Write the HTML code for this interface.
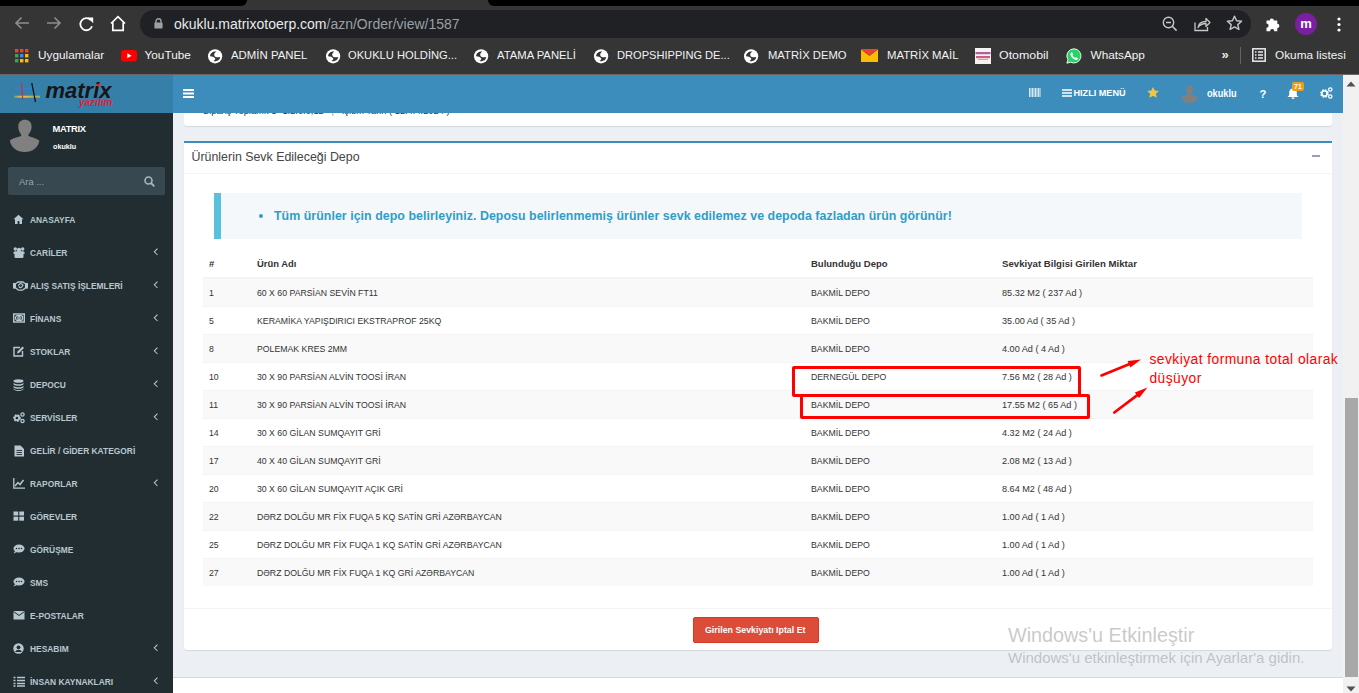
<!DOCTYPE html>
<html><head><meta charset="utf-8">
<style>
*{margin:0;padding:0;box-sizing:border-box}
html,body{width:1359px;height:693px;overflow:hidden;background:#fff;font-family:"Liberation Sans",sans-serif}
.a{position:absolute;white-space:nowrap}
svg{position:absolute;overflow:visible}
#chrome{position:absolute;left:0;top:0;width:1359px;height:74px;background:#353535}
#tabs{position:absolute;left:488px;top:0;width:871px;height:6px;background:#000;border-radius:0 0 0 6px}
#url{position:absolute;left:140px;top:10px;width:1111px;height:28px;background:#202124;border-radius:14px}
.bm{position:absolute;top:48.3px;font-size:11.8px;color:#f1f3f4;line-height:14px;white-space:nowrap}
#hdr{position:absolute;left:0;top:75px;width:1343px;height:38px;background:#3c8dbc}
#logo{position:absolute;left:0;top:75px;width:173px;height:38px;background:#367fa9}
#side{position:absolute;left:0;top:113px;width:173px;height:580px;background:#222d32}
#content{position:absolute;left:173px;top:113px;width:1170px;height:580px;background:#ecf0f5}
#sb{position:absolute;left:1343px;top:75px;width:16px;height:618px;background:#f1f1f1}
#cline{position:absolute;left:0;top:74px;width:1359px;height:1px;background:#6a6464}
.mi{position:absolute;left:30px;font-size:9.9px;font-weight:bold;color:#b8c7ce;line-height:10px;white-space:nowrap;transform:scaleX(.85);transform-origin:0 0}
.chev{position:absolute;left:153px}
.row{position:absolute;left:203px;width:1110px;height:28px;border-top:1px solid #f4f4f4}
.row.s{background:#f9f9f9}
.c{position:absolute;top:8.6px;font-size:9.8px;color:#333;line-height:10px;white-space:nowrap;transform:scaleX(.89);transform-origin:0 0}
.c.n{transform:scaleX(.93)}
.th{position:absolute;top:258.6px;font-size:9.8px;font-weight:bold;color:#333;line-height:10px;white-space:nowrap;transform:scaleX(.97);transform-origin:0 0}
</style></head><body>
<div id="chrome">
  <div id="tabs"></div><div style="position:absolute;left:0;top:0;width:247px;height:6px;background:#000;border-radius:0 0 6px 0"></div>
  <div id="url"></div>
  <!-- nav icons -->
  <svg style="left:14px;top:16px" width="16" height="14" viewBox="0 0 16 14"><path d="M15 7H2M7.5 1.5L2 7l5.5 5.5" fill="none" stroke="#8a8d91" stroke-width="1.6"/></svg>
  <svg style="left:46px;top:16px" width="16" height="14" viewBox="0 0 16 14"><path d="M1 7h13M8.5 1.5L14 7l-5.5 5.5" fill="none" stroke="#8a8d91" stroke-width="1.6"/></svg>
  <svg style="left:78.5px;top:16.5px" width="15" height="15" viewBox="0 0 15 15"><path d="M13 9.2A6 6 0 1 1 11.8 3.2" fill="none" stroke="#fff" stroke-width="1.8"/><path d="M8.6 0.6h5.6v5.6z" fill="#fff"/></svg>
  <svg style="left:110px;top:15px" width="16" height="17" viewBox="0 0 16 17"><path d="M2.8 7.5V15.3h10.4V7.5M1 8.5L8 1.6l7 6.9" fill="none" stroke="#fff" stroke-width="1.7" stroke-linejoin="miter"/></svg>
  <svg style="left:154px;top:18px" width="9" height="11" viewBox="0 0 9 11"><path d="M2 5V3.3a2.5 2.5 0 0 1 5 0V5" fill="none" stroke="#9aa0a6" stroke-width="1.4"/><rect x="0.4" y="4.6" width="8.2" height="6" rx="0.8" fill="#9aa0a6"/></svg>
  <div class="a" style="left:174px;top:16px;font-size:14px;line-height:17px;color:#e8eaed">okuklu.matrixotoerp.com<span style="color:#9aa0a6">/azn/Order/view/1587</span></div>
  <!-- right icons -->
  <svg style="left:1162px;top:16px" width="16" height="16" viewBox="0 0 16 16"><circle cx="6.5" cy="6.5" r="5.2" fill="none" stroke="#c4c7c5" stroke-width="1.4"/><path d="M4 6.5h5M10.3 10.3L14.6 14.6" stroke="#c4c7c5" stroke-width="1.5"/></svg>
  <svg style="left:1194px;top:16px" width="17" height="16" viewBox="0 0 17 16"><path d="M1 6.5V14.5h12.5V11" fill="none" stroke="#c4c7c5" stroke-width="1.3"/><path d="M4 11.5c0.6-4 3.5-6 8-6V2.5l4 4-4 4V7.5c-3.5 0-6 1-8 4z" fill="none" stroke="#c4c7c5" stroke-width="1.3" stroke-linejoin="round"/></svg>
  <svg style="left:1226px;top:15px" width="17" height="16" viewBox="0 0 17 16"><path d="M8.5 1.2l2.1 4.6 5 .5-3.8 3.3 1.1 4.9-4.4-2.6-4.4 2.6 1.1-4.9L1.4 6.3l5-.5z" fill="none" stroke="#c4c7c5" stroke-width="1.4" stroke-linejoin="round"/></svg>
  <svg style="left:1265px;top:15px" width="17" height="17" viewBox="0 0 17 17"><path d="M1.5 5.5h3.2a2.1 2.1 0 1 1 4.2 0h3.4v3.3a2.1 2.1 0 1 1 0 4.2v3.2H9.3a2.1 2.1 0 1 0-4.2 0H1.5v-3.4a2.1 2.1 0 1 0 0-4.2z" fill="#fff"/></svg>
  <div class="a" style="left:1295px;top:13px;width:22px;height:22px;border-radius:11px;background:#7b1fa2"></div>
  <div class="a" style="left:1295px;top:14.5px;width:22px;text-align:center;font-size:13px;line-height:17px;color:#fff;font-weight:bold">m</div>
  <svg style="left:1336.5px;top:17px" width="4" height="15" viewBox="0 0 4 15"><circle cx="2" cy="2" r="1.6" fill="#fff"/><circle cx="2" cy="7.5" r="1.6" fill="#fff"/><circle cx="2" cy="13" r="1.6" fill="#fff"/></svg>
  <!-- bookmarks -->
  <svg style="left:14.5px;top:49px" width="14" height="14" viewBox="0 0 14 14"><rect x="0" y="0" width="3.4" height="3.4" fill="#ea4335"/><rect x="5" y="0" width="3.4" height="3.4" fill="#ea4335"/><rect x="10" y="0" width="3.4" height="3.4" fill="#ea4335"/><rect x="0" y="5" width="3.4" height="3.4" fill="#34a853"/><rect x="5" y="5" width="3.4" height="3.4" fill="#4285f4"/><rect x="10" y="5" width="3.4" height="3.4" fill="#fbbc05"/><rect x="0" y="10" width="3.4" height="3.4" fill="#34a853"/><rect x="5" y="10" width="3.4" height="3.4" fill="#fbbc05"/><rect x="10" y="10" width="3.4" height="3.4" fill="#fbbc05"/></svg>
  <div class="bm" style="left:38px">Uygulamalar</div>
  <svg style="left:121px;top:50px" width="16" height="12" viewBox="0 0 16 12"><rect x="0" y="0" width="16" height="11.5" rx="3" fill="#f00"/><path d="M6.3 3.3v5l4.3-2.5z" fill="#fff"/></svg>
  <div class="bm" style="left:144.5px">YouTube</div>
  <svg style="left:208px;top:48.5px" width="15" height="15" viewBox="0 0 15 15"><use href="#glb"/></svg>
  <div class="bm" style="left:230.5px;transform:scaleX(0.966);transform-origin:0 0">ADMİN PANEL</div>
  <svg style="left:326px;top:48.5px" width="15" height="15" viewBox="0 0 15 15"><use href="#glb"/></svg>
  <div class="bm" style="left:347.5px;transform:scaleX(0.945);transform-origin:0 0">OKUKLU HOLDİNG...</div>
  <svg style="left:474px;top:48.5px" width="15" height="15" viewBox="0 0 15 15"><use href="#glb"/></svg>
  <div class="bm" style="left:496.5px;transform:scaleX(0.956);transform-origin:0 0">ATAMA PANELİ</div>
  <svg style="left:594px;top:48.5px" width="15" height="15" viewBox="0 0 15 15"><use href="#glb"/></svg>
  <div class="bm" style="left:616.5px;transform:scaleX(0.94);transform-origin:0 0">DROPSHIPPING DE...</div>
  <svg style="left:744px;top:48.5px" width="15" height="15" viewBox="0 0 15 15"><use href="#glb"/></svg>
  <div class="bm" style="left:767.5px;transform:scaleX(0.953);transform-origin:0 0">MATRİX DEMO</div>
  <svg style="left:861px;top:49px" width="17" height="13" viewBox="0 0 17 13"><rect x="0" y="0" width="17" height="13" fill="#fbbc05"/><path d="M0 0l8.5 6.5L17 0" fill="#ea4335"/><path d="M0 0l8.5 6.5L17 0" fill="none" stroke="#c5221f" stroke-width="0.8"/></svg>
  <div class="bm" style="left:886.5px;transform:scaleX(0.96);transform-origin:0 0">MATRİX MAİL</div>
  <svg style="left:975px;top:48px" width="16" height="16" viewBox="0 0 16 16"><rect width="16" height="16" fill="#f6f2f2"/><rect x="0.5" y="4" width="15" height="2.2" fill="#9a4a8a" opacity="0.85"/><rect x="1" y="8" width="14" height="2.2" fill="#c83a5a" opacity="0.8"/><rect x="3" y="11" width="10" height="1" fill="#d0a0b0"/></svg>
  <div class="bm" style="left:999px;transform:scaleX(1.05);transform-origin:0 0">Otomobil</div>
  <svg style="left:1066px;top:48px" width="16" height="16" viewBox="0 0 16 16"><path d="M8 .8A7.1 7.1 0 0 0 1.9 11.6L.9 15.2l3.7-1A7.1 7.1 0 1 0 8 .8z" fill="#25d366" stroke="#fff" stroke-width="0.9"/><path d="M5.3 4.4c.3-.3.7-.3.9 0l.8 1.7c.1.3 0 .5-.2.7l-.4.5c.6 1.2 1.5 2.1 2.7 2.7l.5-.5c.2-.2.5-.2.7-.1l1.6.8c.3.1.3.5.1.8-.5.8-1.3 1.2-2.2.9C7.5 11.3 5.3 9.3 4.5 7c-.3-.9 0-1.9.8-2.6z" fill="#fff"/></svg>
  <div class="bm" style="left:1090.5px">WhatsApp</div>
  <div class="a" style="left:1221.5px;top:47px;font-size:13px;line-height:15px;color:#e8eaed;font-weight:bold">»</div>
  <div class="a" style="left:1240px;top:47px;width:1px;height:17px;background:#5f6368"></div>
  <svg style="left:1252px;top:48px" width="14" height="14" viewBox="0 0 14 14"><rect x="0.8" y="0.8" width="12.4" height="12.4" fill="none" stroke="#e8eaed" stroke-width="1.5"/><path d="M3 4h1.5M6 4h5M3 7h1.5M6 7h5M3 10h1.5M6 10h5" stroke="#e8eaed" stroke-width="1.4"/></svg>
  <div class="bm" style="left:1275px">Okuma listesi</div>
</div>
<svg width="0" height="0" style="position:absolute"><defs><g id="glb"><circle cx="7.1" cy="7.3" r="7.1" fill="#fff"/><path d="M2.1 7.3C2.1 4.3 4.5 2.2 8.4 2.4 6.5 3.6 5.8 5.1 6.4 6.7 7.2 8.2 9.6 8.5 12.2 7.9 12 10.9 9.1 12.5 5.2 12.1 6.8 11.2 7.5 10.3 7.2 9.4 6.2 7.9 4.3 7.5 2.1 7.3z" fill="#353535"/></g></defs></svg>

<div id="hdr"></div>
<div id="logo"></div>
<div id="side"></div>
<div id="content"></div>
<div id="sb"></div><div id="cline"></div>
<!-- header -->
<svg style="left:13px;top:81px" width="28" height="22" viewBox="0 0 28 22"><defs><linearGradient id="yl" gradientUnits="userSpaceOnUse" x1="0" y1="0" x2="28" y2="0"><stop offset="0" stop-color="#e0c040" stop-opacity="0.3"/><stop offset="0.3" stop-color="#e8c848"/><stop offset="1" stop-color="#e0c040" stop-opacity="0.6"/></linearGradient><linearGradient id="bl" gradientUnits="userSpaceOnUse" x1="0" y1="0" x2="28" y2="0"><stop offset="0" stop-color="#2f7fd8" stop-opacity="0.4"/><stop offset="0.4" stop-color="#2f7fd8"/><stop offset="1" stop-color="#2f7fd8" stop-opacity="0.3"/></linearGradient></defs><path d="M1 7.5h26" stroke="url(#bl)" stroke-width="1.6"/><path d="M1 15.7h26" stroke="url(#yl)" stroke-width="2"/><path d="M8.5 2l1.2 17" stroke="#c8323c" stroke-width="1.3"/><path d="M18.8 2l3.7 19" stroke="#111" stroke-width="1.3"/></svg>
<div class="a" style="left:45.5px;top:79px;font-size:22px;line-height:24px;font-weight:bold;font-style:italic;color:#161616;letter-spacing:0px">matrix</div>
<svg style="left:95.5px;top:82.5px" width="5" height="5" viewBox="0 0 5 5"><path d="M0.5 1l4-0.5-1.8 4z" fill="#e02030"/></svg>
<div class="a" style="left:79px;top:97px;font-size:10px;line-height:11px;font-weight:bold;font-style:italic;color:#d9263a">yazılım</div>
<svg style="left:183px;top:89px" width="11" height="9" viewBox="0 0 11 9"><path d="M0 1h11M0 4.5h11M0 8h11" stroke="#fff" stroke-width="1.8"/></svg>
<svg style="left:1029px;top:88px" width="12" height="9" viewBox="0 0 12 9"><path d="M0.5 0v9M2 0v9M3.5 0v9M5 0v9M6.5 0v9M8 0v9M9.5 0v9M11 0v9" stroke="#fff" stroke-width="0.9" opacity="0.9"/></svg>
<svg style="left:1062px;top:89px" width="10" height="8" viewBox="0 0 10 8"><path d="M0 1h10M0 4h10M0 7h10" stroke="#fff" stroke-width="1.6"/></svg>
<div class="a" style="left:1073.5px;top:88px;font-size:9.1px;line-height:11px;font-weight:bold;color:#fff">HIZLI MENÜ</div>
<svg style="left:1147px;top:87px" width="12" height="11" viewBox="0 0 12 11"><path d="M6 0l1.8 3.6 4 .5-2.9 2.7.8 4L6 8.8 2.3 10.8l.8-4L.2 4.1l4-.5z" fill="#f5c342"/></svg>
<svg style="left:1181px;top:85px" width="17" height="19" viewBox="0 0 31 34"><path d="M15.9 0.7C12 0.7 9.3 3 9.3 7.5 9.3 11 10.5 13.5 12.2 15.5L12.2 17C8 18.5 3 19.5 0.9 21.5 1.5 28 8 33.1 15.7 33.1 23.5 33.1 29.8 28 30.3 21.5 28 19.5 23 18.5 19.4 17L19.4 15.5C21.2 13.5 22.6 11 22.6 7.5 22.6 3 19.8 0.7 15.9 0.7z" fill="#808080"/></svg>
<div class="a" style="left:1206.5px;top:88px;font-size:10.2px;line-height:12px;color:#fff;font-weight:bold;transform:scaleX(.9);transform-origin:0 0">okuklu</div>
<div class="a" style="left:1259.5px;top:87.5px;font-size:11.2px;line-height:12px;font-weight:bold;color:#fff">?</div>
<svg style="left:1287px;top:88px" width="12" height="11" viewBox="0 0 12 11"><path d="M6 0.5c-2.5 0-3.8 1.8-3.8 4.2v2.5L0.5 9h11L9.8 7.2V4.7C9.8 2.3 8.5 0.5 6 0.5z" fill="#fff"/><path d="M4.5 9.5a1.5 1.5 0 0 0 3 0z" fill="#fff"/></svg>
<div class="a" style="left:1292px;top:82px;width:12px;height:9px;background:#f39c12;border-radius:2px;font-size:7px;line-height:9px;font-weight:bold;color:#fff;text-align:center">71</div>
<svg style="left:1320px;top:87px" width="13" height="12" viewBox="0 0 13 12"><circle cx="4.5" cy="6.5" r="3.2" fill="none" stroke="#fff" stroke-width="2.2" stroke-dasharray="1.6 0.9"/><circle cx="4.5" cy="6.5" r="2.6" fill="none" stroke="#fff" stroke-width="1.4"/><circle cx="10.3" cy="2.5" r="1.7" fill="none" stroke="#fff" stroke-width="1.2"/><circle cx="10.3" cy="9.5" r="1.7" fill="none" stroke="#fff" stroke-width="1.2"/></svg>
<svg style="left:1346px;top:81px" width="10" height="6" viewBox="0 0 10 6"><path d="M0.5 5.5L5 0.5l4.5 5z" fill="#505050"/></svg>
<svg style="left:1346px;top:686px" width="10" height="6" viewBox="0 0 10 6"><path d="M0.5 0.5L5 5.5l4.5-5z" fill="#505050"/></svg>
<div class="a" style="left:1345px;top:398px;width:13px;height:279px;background:#a8a8a8"></div>

<!-- sidebar -->
<svg style="left:9px;top:119px" width="31" height="34" viewBox="0 0 31 34"><path d="M15.9 0.7C12 0.7 9.3 3 9.3 7.5 9.3 11 10.5 13.5 12.2 15.5L12.2 17C8 18.5 3 19.5 0.9 21.5 1.5 28 8 33.1 15.7 33.1 23.5 33.1 29.8 28 30.3 21.5 28 19.5 23 18.5 19.4 17L19.4 15.5C21.2 13.5 22.6 11 22.6 7.5 22.6 3 19.8 0.7 15.9 0.7z" fill="#808080"/></svg>
<div class="a" style="left:52.5px;top:123px;font-size:9.4px;line-height:11px;font-weight:bold;color:#fff;letter-spacing:-0.35px">MATRIX</div>
<div class="a" style="left:53px;top:142px;font-size:7.2px;line-height:9px;font-weight:bold;color:#fff">okuklu</div>
<div class="a" style="left:8px;top:167px;width:157px;height:28px;background:#374850;border-radius:2px"></div>
<div class="a" style="left:19px;top:177px;font-size:9.4px;line-height:10px;color:#9aa6ac">Ara ...</div>
<svg style="left:144px;top:176px" width="11" height="11" viewBox="0 0 11 11"><circle cx="4.5" cy="4.5" r="3.5" fill="none" stroke="#a9b5bb" stroke-width="1.6"/><path d="M7 7l3.3 3.3" stroke="#a9b5bb" stroke-width="1.9"/></svg>

<svg style="left:13px;top:214px" width="11" height="10" viewBox="0 0 11 10"><path d="M5.5 0.8L0.5 5.3h1.5V10h2.6V7h1.8v3h2.6V5.3h1.5z" fill="#b8c7ce"/></svg>
<div class="mi" style="top:214.5px">ANASAYFA</div>
<svg style="left:13px;top:247px" width="12" height="11" viewBox="0 0 12 11"><circle cx="2.3" cy="2" r="1.7" fill="#b8c7ce"/><circle cx="9.7" cy="2" r="1.7" fill="#b8c7ce"/><circle cx="6" cy="3" r="2.2" fill="#b8c7ce"/><path d="M0.3 6.2Q0.3 4.3 2.2 4.3H9.8Q11.7 4.3 11.7 6.2V6.8H10.5V10Q10.5 11 9.3 11H2.7Q1.5 11 1.5 10V6.8H0.3z" fill="#b8c7ce"/></svg>
<div class="mi" style="top:247.5px">CARİLER</div>
<svg class="chev" style="left:153px;top:248px" width="5" height="8" viewBox="0 0 5 8"><path d="M4.5 0.6L1.3 3.8l3.2 3.2" fill="none" stroke="#b8c7ce" stroke-width="1.05"/></svg>
<svg style="left:13px;top:280px" width="15" height="11" viewBox="0 0 15 11"><rect x="0" y="3" width="2.4" height="5.6" fill="#b8c7ce"/><rect x="12.6" y="3" width="2.4" height="5.6" fill="#b8c7ce"/><path d="M2.4 3.8L5.2 2H9.8L12.6 3.8V7.8L9.4 10.2H5.6L2.4 7.8z" fill="none" stroke="#b8c7ce" stroke-width="1.3"/><path d="M5.2 5.6Q7.6 1.8 10 5.2Q7.6 9.4 5.8 6.4" fill="none" stroke="#b8c7ce" stroke-width="1.2"/></svg>
<div class="mi" style="top:280.5px">ALIŞ SATIŞ İŞLEMLERİ</div>
<svg class="chev" style="left:153px;top:281px" width="5" height="8" viewBox="0 0 5 8"><path d="M4.5 0.6L1.3 3.8l3.2 3.2" fill="none" stroke="#b8c7ce" stroke-width="1.05"/></svg>
<svg style="left:13px;top:313px" width="12" height="10" viewBox="0 0 12 10"><rect x="0.7" y="1" width="10.6" height="8" fill="none" stroke="#b8c7ce" stroke-width="1.4"/><ellipse cx="4.8" cy="5" rx="2.3" ry="2.6" fill="none" stroke="#b8c7ce" stroke-width="1.3"/><ellipse cx="7.2" cy="5" rx="2.3" ry="2.6" fill="none" stroke="#b8c7ce" stroke-width="1.3"/></svg>
<div class="mi" style="top:313.5px">FİNANS</div>
<svg class="chev" style="left:153px;top:314px" width="5" height="8" viewBox="0 0 5 8"><path d="M4.5 0.6L1.3 3.8l3.2 3.2" fill="none" stroke="#b8c7ce" stroke-width="1.05"/></svg>
<svg style="left:13px;top:346px" width="11" height="11" viewBox="0 0 11 11"><path d="M7 1.5H1v8.5h8.5V5" fill="none" stroke="#b8c7ce" stroke-width="1.4"/><path d="M4 7.5l0.5-2L9.5 0.5l1.5 1.5-5 5z" fill="#b8c7ce"/></svg>
<div class="mi" style="top:346.5px">STOKLAR</div>
<svg class="chev" style="left:153px;top:347px" width="5" height="8" viewBox="0 0 5 8"><path d="M4.5 0.6L1.3 3.8l3.2 3.2" fill="none" stroke="#b8c7ce" stroke-width="1.05"/></svg>
<svg style="left:13px;top:379px" width="11" height="13" viewBox="0 0 11 13"><ellipse cx="5.5" cy="2" rx="5" ry="1.8" fill="#b8c7ce"/><path d="M0.5 3.5c0 1 2.2 1.8 5 1.8s5-.8 5-1.8v1.5c0 1-2.2 1.8-5 1.8s-5-.8-5-1.8zM0.5 6.5c0 1 2.2 1.8 5 1.8s5-.8 5-1.8V8c0 1-2.2 1.8-5 1.8s-5-.8-5-1.8zM0.5 9.3c0 1 2.2 1.8 5 1.8s5-.8 5-1.8v0.8c0 1-2.2 1.8-5 1.8s-5-.8-5-1.8z" fill="#b8c7ce"/></svg>
<div class="mi" style="top:379.5px">DEPOCU</div>
<svg class="chev" style="left:153px;top:380px" width="5" height="8" viewBox="0 0 5 8"><path d="M4.5 0.6L1.3 3.8l3.2 3.2" fill="none" stroke="#b8c7ce" stroke-width="1.05"/></svg>
<svg style="left:13px;top:412px" width="11" height="12" viewBox="0 0 11 12"><circle cx="4" cy="6" r="2.6" fill="none" stroke="#b8c7ce" stroke-width="2.4" stroke-dasharray="1.5 1"/><circle cx="4" cy="6" r="2.3" fill="none" stroke="#b8c7ce" stroke-width="1.5"/><circle cx="9.5" cy="2.5" r="1.6" fill="none" stroke="#b8c7ce" stroke-width="1.3"/><circle cx="9.5" cy="9" r="1.6" fill="none" stroke="#b8c7ce" stroke-width="1.3"/></svg>
<div class="mi" style="top:412.5px">SERVİSLER</div>
<svg class="chev" style="left:153px;top:413px" width="5" height="8" viewBox="0 0 5 8"><path d="M4.5 0.6L1.3 3.8l3.2 3.2" fill="none" stroke="#b8c7ce" stroke-width="1.05"/></svg>
<svg style="left:14px;top:445px" width="10" height="12" viewBox="0 0 10 12"><path d="M0.5 0.5h6l3.5 3.5v7.5H0.5z" fill="#b8c7ce"/><path d="M2.5 5.5h5.5M2.5 7.5h5.5M2.5 9.5h5.5" stroke="#222d32" stroke-width="0.9"/></svg>
<div class="mi" style="top:445.5px">GELİR / GİDER KATEGORİ</div>
<svg style="left:13px;top:478px" width="12" height="11" viewBox="0 0 12 11"><path d="M0.8 0v10.2H12" fill="none" stroke="#b8c7ce" stroke-width="1.3"/><path d="M2 8l3-3.5 2 2 3.5-4.5" fill="none" stroke="#b8c7ce" stroke-width="1.5"/></svg>
<div class="mi" style="top:478.5px">RAPORLAR</div>
<svg class="chev" style="left:153px;top:479px" width="5" height="8" viewBox="0 0 5 8"><path d="M4.5 0.6L1.3 3.8l3.2 3.2" fill="none" stroke="#b8c7ce" stroke-width="1.05"/></svg>
<svg style="left:13px;top:511px" width="12" height="10" viewBox="0 0 12 10"><rect x="0.5" y="0.5" width="4.7" height="4" fill="#b8c7ce"/><rect x="6.3" y="0.5" width="4.7" height="4" fill="#b8c7ce"/><rect x="0.5" y="5.7" width="4.7" height="4" fill="#b8c7ce"/><rect x="6.3" y="5.7" width="4.7" height="4" fill="#b8c7ce"/></svg>
<div class="mi" style="top:511.5px">GÖREVLER</div>
<svg style="left:13px;top:544px" width="12" height="10" viewBox="0 0 12 10"><ellipse cx="6" cy="4.5" rx="5.5" ry="4" fill="#b8c7ce"/><path d="M2 7l-1.5 2.5 3.5-1.5z" fill="#b8c7ce"/><circle cx="3.5" cy="4.5" r="0.8" fill="#222d32"/><circle cx="6" cy="4.5" r="0.8" fill="#222d32"/><circle cx="8.5" cy="4.5" r="0.8" fill="#222d32"/></svg>
<div class="mi" style="top:544.5px">GÖRÜŞME</div>
<svg style="left:13px;top:577px" width="12" height="10" viewBox="0 0 12 10"><ellipse cx="6" cy="4.5" rx="5.5" ry="4" fill="#b8c7ce"/><path d="M2 7l-1.5 2.5 3.5-1.5z" fill="#b8c7ce"/><circle cx="3.5" cy="4.5" r="0.8" fill="#222d32"/><circle cx="6" cy="4.5" r="0.8" fill="#222d32"/><circle cx="8.5" cy="4.5" r="0.8" fill="#222d32"/></svg>
<div class="mi" style="top:577.5px">SMS</div>
<svg style="left:13px;top:610px" width="12" height="10" viewBox="0 0 12 10"><rect x="0.5" y="1" width="11" height="8.5" fill="#b8c7ce"/><path d="M0.5 1.5l5.5 4 5.5-4" fill="none" stroke="#222d32" stroke-width="1"/></svg>
<div class="mi" style="top:610.5px">E-POSTALAR</div>
<svg style="left:13px;top:643px" width="11" height="11" viewBox="0 0 11 11"><circle cx="5.5" cy="5.5" r="5.2" fill="#b8c7ce"/><circle cx="5.5" cy="4.3" r="1.9" fill="#222d32"/><path d="M2.2 9c0.6-1.6 1.8-2.3 3.3-2.3s2.7.7 3.3 2.3" fill="#222d32"/></svg>
<div class="mi" style="top:643.5px">HESABIM</div>
<svg class="chev" style="left:153px;top:644px" width="5" height="8" viewBox="0 0 5 8"><path d="M4.5 0.6L1.3 3.8l3.2 3.2" fill="none" stroke="#b8c7ce" stroke-width="1.05"/></svg>
<svg style="left:13px;top:676px" width="12" height="11" viewBox="0 0 12 11"><path d="M0.5 1.5h2M4 1.5h8M0.5 4.5h2M4 4.5h8M0.5 7.5h2M4 7.5h8M0.5 10h2M4 10h8" stroke="#b8c7ce" stroke-width="1.6"/></svg>
<div class="mi" style="top:676.5px">İNSAN KAYNAKLARI</div>
<svg class="chev" style="left:153px;top:677px" width="5" height="8" viewBox="0 0 5 8"><path d="M4.5 0.6L1.3 3.8l3.2 3.2" fill="none" stroke="#b8c7ce" stroke-width="1.05"/></svg>
<!-- content -->
<div class="a" style="left:184px;top:113px;width:1148px;height:13px;background:#fff;border-radius:0 0 3px 3px;box-shadow:0 1px 1px rgba(0,0,0,0.1)"></div>
<div class="a" style="left:184px;top:113px;width:1148px;height:5px;overflow:hidden"><div class="a" style="left:19px;top:-7px;font-size:9.3px;line-height:10px;color:#333">Sipariş Toplamı: 5 -1.2.0.0,12 &nbsp;&nbsp;<span style="color:#999">|</span>&nbsp;&nbsp; İşlem Tarih ( 12.4.4.2024 )</div></div>
<div class="a" style="left:184px;top:141px;width:1148px;height:509px;background:#fff;border-top:2px solid #3c8dbc;border-radius:0 0 3px 3px;box-shadow:0 1px 1px rgba(0,0,0,0.1)"></div>
<div class="a" style="left:191.5px;top:150px;font-size:12.4px;line-height:15px;color:#444">Ürünlerin Sevk Edileceği Depo</div>
<div class="a" style="left:1312px;top:155px;width:8px;height:2px;background:#97a0b3"></div>
<div class="a" style="left:184px;top:173px;width:1148px;height:1px;background:#f4f4f4"></div>
<div class="a" style="left:214px;top:193px;width:1088px;height:46px;background:#f4f8fb;border-left:7px solid #5bc0de"></div>
<div class="a" style="left:258.8px;top:214px;width:4.2px;height:4.2px;border-radius:3px;background:#31a0c8"></div>
<div class="a" style="left:274px;top:209px;font-size:12.4px;line-height:15px;font-weight:bold;color:#2f9ec7;letter-spacing:0.04px">Tüm ürünler için depo belirleyiniz. Deposu belirlenmemiş ürünler sevk edilemez ve depoda fazladan ürün görünür!</div>
<div class="th" style="left:209px">#</div>
<div class="th" style="left:257px;transform:scaleX(.96)">Ürün Adı</div>
<div class="th" style="left:811px">Bulunduğu Depo</div>
<div class="th" style="left:1002px;transform:scaleX(.983)">Sevkiyat Bilgisi Girilen Miktar</div>
<div class="a" style="left:203px;top:277px;width:1110px;height:2px;background:#f4f4f4"></div>
<div class="row s" style="top:278px"><div class="c" style="left:6px">1</div><div class="c" style="left:54px">60 X 60 PARSİAN SEVİN FT11</div><div class="c" style="left:608px">BAKMİL DEPO</div><div class="c n" style="left:799px">85.32 M2 ( 237 Ad )</div></div>
<div class="row" style="top:306px"><div class="c" style="left:6px">5</div><div class="c" style="left:54px">KERAMİKA YAPIŞDIRICI EKSTRAPROF 25KQ</div><div class="c" style="left:608px">BAKMİL DEPO</div><div class="c n" style="left:799px">35.00 Ad ( 35 Ad )</div></div>
<div class="row s" style="top:334px"><div class="c" style="left:6px">8</div><div class="c" style="left:54px">POLEMAK KRES 2MM</div><div class="c" style="left:608px">BAKMİL DEPO</div><div class="c n" style="left:799px">4.00 Ad ( 4 Ad )</div></div>
<div class="row" style="top:362px"><div class="c" style="left:6px">10</div><div class="c" style="left:54px">30 X 90 PARSİAN ALVİN TOOSİ İRAN</div><div class="c" style="left:608px">DERNEGÜL DEPO</div><div class="c n" style="left:799px">7.56 M2 ( 28 Ad )</div></div>
<div class="row s" style="top:390px"><div class="c" style="left:6px">11</div><div class="c" style="left:54px">30 X 90 PARSİAN ALVİN TOOSİ İRAN</div><div class="c" style="left:608px">BAKMİL DEPO</div><div class="c n" style="left:799px">17.55 M2 ( 65 Ad )</div></div>
<div class="row" style="top:418px"><div class="c" style="left:6px">14</div><div class="c" style="left:54px">30 X 60 GİLAN SUMQAYIT GRİ</div><div class="c" style="left:608px">BAKMİL DEPO</div><div class="c n" style="left:799px">4.32 M2 ( 24 Ad )</div></div>
<div class="row s" style="top:446px"><div class="c" style="left:6px">17</div><div class="c" style="left:54px">40 X 40 GİLAN SUMQAYIT GRİ</div><div class="c" style="left:608px">BAKMİL DEPO</div><div class="c n" style="left:799px">2.08 M2 ( 13 Ad )</div></div>
<div class="row" style="top:474px"><div class="c" style="left:6px">20</div><div class="c" style="left:54px">30 X 60 GİLAN SUMQAYIT AÇIK GRİ</div><div class="c" style="left:608px">BAKMİL DEPO</div><div class="c n" style="left:799px">8.64 M2 ( 48 Ad )</div></div>
<div class="row s" style="top:502px"><div class="c" style="left:6px">22</div><div class="c" style="left:54px">DƏRZ DOLĞU MR FİX FUQA 5 KQ SATİN GRİ AZƏRBAYCAN</div><div class="c" style="left:608px">BAKMİL DEPO</div><div class="c n" style="left:799px">1.00 Ad ( 1 Ad )</div></div>
<div class="row" style="top:530px"><div class="c" style="left:6px">25</div><div class="c" style="left:54px">DƏRZ DOLĞU MR FİX FUQA 1 KQ SATİN GRİ AZƏRBAYCAN</div><div class="c" style="left:608px">BAKMİL DEPO</div><div class="c n" style="left:799px">1.00 Ad ( 1 Ad )</div></div>
<div class="row s" style="top:558px"><div class="c" style="left:6px">27</div><div class="c" style="left:54px">DƏRZ DOLĞU MR FİX FUQA 1 KQ GRİ AZƏRBAYCAN</div><div class="c" style="left:608px">BAKMİL DEPO</div><div class="c n" style="left:799px">1.00 Ad ( 1 Ad )</div></div>
<div class="a" style="left:184px;top:608px;width:1148px;height:1px;background:#f4f4f4"></div>
<div class="a" style="left:693px;top:617px;width:126px;height:26px;background:#dd4b39;border:1px solid #d73925;border-radius:2px"></div>
<div class="a" style="left:705px;top:624px;font-size:9.8px;line-height:11px;color:#fff;font-weight:bold;transform:scaleX(.9);transform-origin:0 0">Girilen Sevkiyatı Iptal Et</div>
<div class="a" style="left:173px;top:677px;width:1170px;height:16px;background:#fff;border-top:1px solid #d2d6de"></div>

<!-- annotations -->
<div class="a" style="left:792px;top:366px;width:289px;height:31px;border:3px solid #f00;border-radius:2px"></div>
<div class="a" style="left:800px;top:394px;width:290px;height:25px;border:3px solid #f00;border-radius:2px"></div>
<svg style="left:1100px;top:356px" width="50" height="60" viewBox="0 0 50 60">
<path d="M1.5 19.4L29 8.3" stroke="#f00" stroke-width="2.7" stroke-linecap="round"/><path d="M41 3.4L30.3 11.5 27.6 5z" fill="#f00"/>
<path d="M14.3 56.5L37 39.3" stroke="#f00" stroke-width="2.7" stroke-linecap="round"/><path d="M47.4 31.5L39.1 42.1 34.9 36.5z" fill="#f00"/>
</svg>
<div class="a" style="left:1149.5px;top:350px;font-size:13.8px;line-height:19px;color:#f00;letter-spacing:0.45px">sevkiyat formuna total olarak<br>düşüyor</div>

<!-- watermark -->
<div class="a" style="left:1008px;top:622.5px;font-size:19.8px;line-height:24px;color:rgba(150,150,150,0.52)">Windows'u Etkinleştir</div>
<div class="a" style="left:1008px;top:648.5px;font-size:15px;line-height:18px;color:rgba(150,150,150,0.52)">Windows'u etkinleştirmek için Ayarlar'a gidin.</div>

</body></html>
